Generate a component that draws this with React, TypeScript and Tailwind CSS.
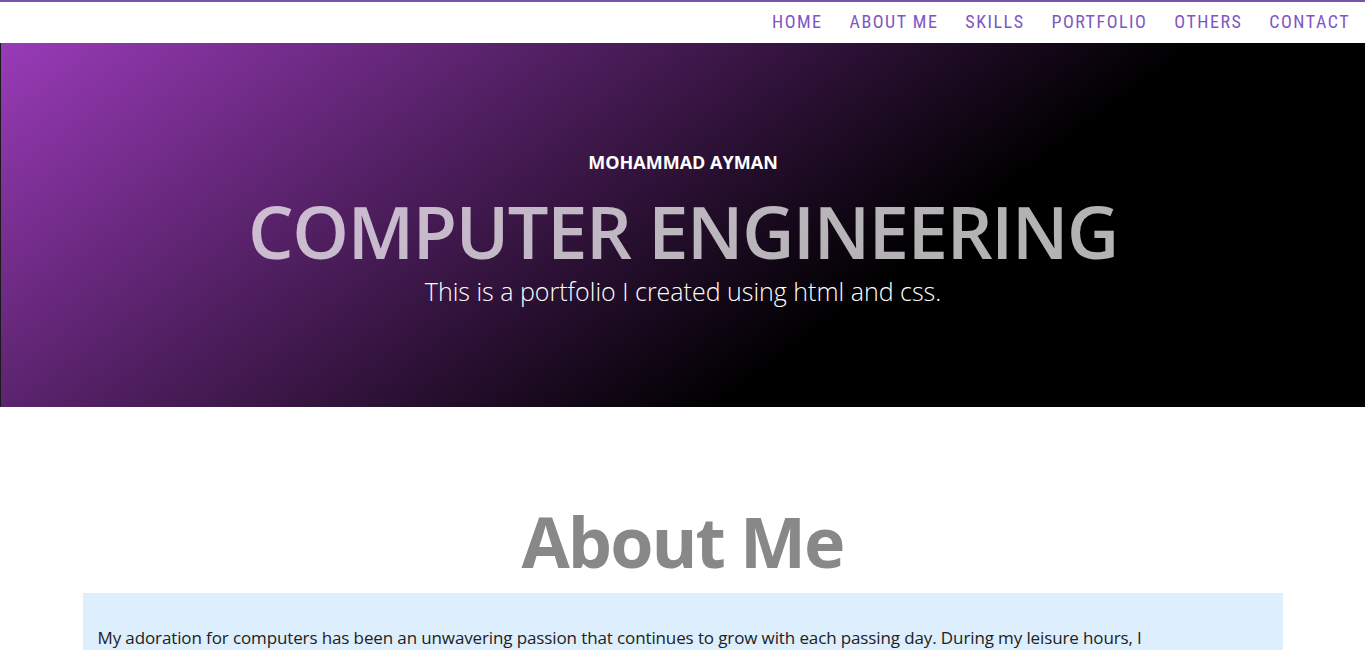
import React from 'react';

const links = ['Home', 'About Me', 'Skills', 'Portfolio', 'Others', 'Contact'];

const Nav: React.FC = () => (
  <nav className="h-[43px] border-t-2 border-[#7b52ab] bg-white flex justify-end items-center pr-[15px] pb-[2px]">
    <ul className="flex gap-[27px] font-['Roboto',sans-serif] text-[18px] [font-stretch:75%] tracking-[1.5px] uppercase text-[#7e57c2]">
      {links.map((l) => (
        <li key={l}>
          <a href={'#' + l.toLowerCase().replace(' ', '')}>{l}</a>
        </li>
      ))}
    </ul>
  </nav>
);

const Hero: React.FC = () => (
  <header className="h-[364px] pt-[9px] border-l border-white/10 bg-[linear-gradient(143deg,#993bb8_0%,#000_65%)] flex flex-col items-center justify-center text-center font-['Open_Sans',sans-serif]">
    <h3 className="text-white font-bold text-[18px] mb-[19px]">MOHAMMAD AYMAN</h3>
    <h1 className="text-white/70 font-semibold text-[72px] leading-none tracking-[-1.3px]">COMPUTER ENGINEERING</h1>
    <p className="text-white font-light text-[25px] mt-[6px]">This is a portfolio I created using html and css.</p>
  </header>
);

export default function App() {
  return (
    <div className="bg-white min-h-screen">
      <Nav />
      <Hero />
      <section id="aboutme" className="pt-[99px] font-['Open_Sans',sans-serif]">
        <h2 className="text-center text-[#888] font-bold text-[70px] leading-none tracking-[-2px] mb-[17px]">About Me</h2>
        <div className="mx-auto w-[1200px] bg-[#ddeefd] px-[15px] pt-[31px] pb-[30px]">
          <p className="text-[17px] leading-[27px] tracking-[-0.12px] text-[#222]">
            My adoration for computers has been an unwavering passion that continues to grow with each passing day. During my leisure hours, I
            {' enthusiastically\u00a0explore'} new technologies, build small projects and dig into how software and hardware work together to
            solve real problems.
          </p>
        </div>
      </section>
    </div>
  );
}
